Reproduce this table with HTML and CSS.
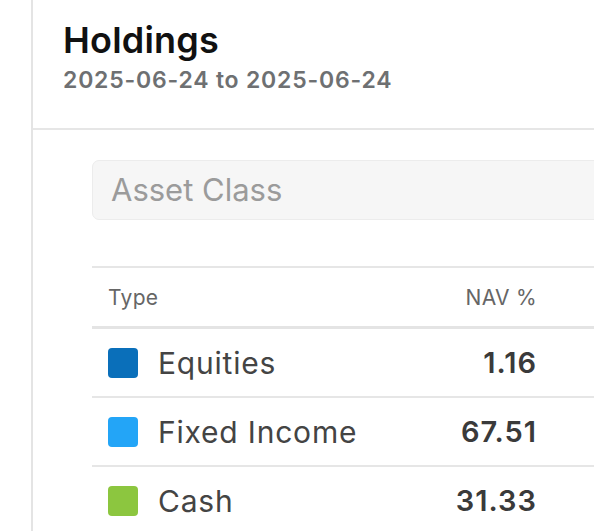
FILE: index.html
```html
<!DOCTYPE html>
<html>
<head>
<meta charset="utf-8">
<link rel="stylesheet" href="styles.css">
</head>
<body>
<div class="panel">
  <header class="head">
    <h1 class="title">Holdings</h1>
    <div class="range">2025-06-24 to 2025-06-24</div>
  </header>
  <section class="content">
    <div class="select">Asset Class</div>
    <table class="table">
      <thead>
        <tr><th class="c-type">Type</th><th class="c-nav">NAV %</th><th class="c-pad"></th></tr>
      </thead>
      <tbody>
        <tr><td class="c-type"><span class="sw sw-eq"></span>Equities</td><td class="c-nav">1.16</td><td class="c-pad"></td></tr>
        <tr><td class="c-type"><span class="sw sw-fi"></span>Fixed Income</td><td class="c-nav">67.51</td><td class="c-pad"></td></tr>
        <tr><td class="c-type"><span class="sw sw-ca"></span>Cash</td><td class="c-nav">31.33</td><td class="c-pad"></td></tr>
      </tbody>
    </table>
  </section>
</div>
</body>
</html>
```

FILE: styles.css
```css
html, body {
  margin: 0;
  padding: 0;
  background: #fff;
  overflow: hidden;
}
body {
  font-family: Inter, Lato, Arial, sans-serif;
  width: 594px;
  height: 531px;
}
.panel {
  margin-left: 31px;
  border-left: 2px solid #e4e4e4;
  height: 531px;
  width: 700px;
}
.head {
  padding: 18px 30px 0 30px;
  height: 110px;
  border-bottom: 2px solid #e6e6e6;
}
.title {
  margin: 0;
  font-size: 36px;
  font-weight: 600;
  color: #111;
  line-height: 44px;
  letter-spacing: 0.2px;
}
.range {
  margin-top: 4px;
  font-size: 23px;
  font-weight: 600;
  color: #6e7072;
  line-height: 28px;
  letter-spacing: 0.8px;
}
.content {
  padding: 30px 0 0 59px;
}
.select {
  height: 60px;
  box-sizing: border-box;
  border: 1px solid #ececec;
  background: #f6f6f6;
  border-radius: 7px;
  padding-left: 18px;
  font-size: 31px;
  color: #9b9b9b;
  line-height: 58px;
}
.table {
  margin-top: 46px;
  border-collapse: collapse;
  width: 620px;
  border-top: 2px solid #e6e6e6;
}
.table th {
  font-weight: 400;
  font-size: 21px;
  color: #666;
  height: 58px;
  padding: 0;
  border-bottom: 3px solid #e4e4e4;
  letter-spacing: 0.3px;
}
.table td {
  height: 67px;
  padding: 0;
  border-bottom: 2px solid #e6e6e6;
}
.table tr:last-child td { border-bottom: none; }
.c-type {
  text-align: left;
  padding-left: 16px !important;
  width: 300px;
  font-size: 30px;
  color: #444;
  white-space: nowrap;
  letter-spacing: 0.8px;
}
.table th.c-type { font-size: 21px; color: #666; letter-spacing: 0.3px; }
.c-nav {
  text-align: right;
  width: 129px;
  font-size: 29px;
  font-weight: 600;
  color: #3a3a3a;
  letter-spacing: 1px;
}
.table th.c-nav { font-weight: 400; }
.sw {
  display: inline-block;
  width: 30px;
  height: 30px;
  border-radius: 4px;
  vertical-align: -4px;
  margin-right: 20px;
}
.sw-eq { background: #0a6fba; }
.sw-fi { background: #23a5f7; }
.sw-ca { background: #8cc63f; }
```
